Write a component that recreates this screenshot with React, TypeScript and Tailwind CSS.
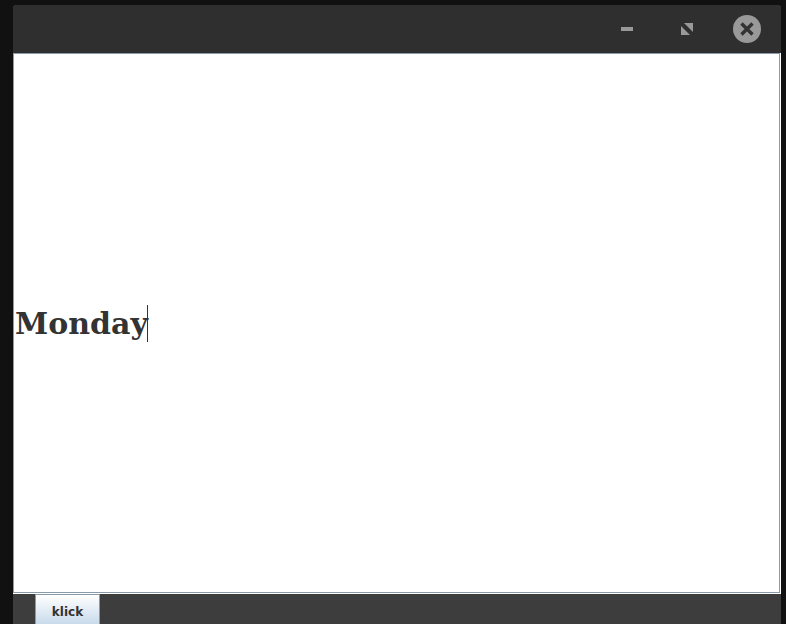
export default function App() {
  return (
    <div className="h-[624px] w-[786px] overflow-hidden bg-[#111111] pt-[5px] pl-[13px] pr-[5px]">
      <div className="flex h-full flex-col overflow-hidden rounded-t-[3px] bg-[#3d3d3d]">
        {/* title bar */}
        <div className="flex h-[48px] shrink-0 items-center justify-end bg-[#2f2f2f]">
          <div className="mr-[48px] h-[4px] w-[12px] bg-[#999999]" />
          <svg className="mr-[40px]" width="12" height="12" viewBox="0 0 12 12">
            <path d="M3 0H12V9Z" fill="#999999" />
            <path d="M0 3L9 12H0Z" fill="#999999" />
          </svg>
          <div className="mr-[20px] flex h-[28px] w-[28px] items-center justify-center rounded-full bg-[#999999]">
            <svg width="14" height="14" viewBox="0 0 14 14">
              <path d="M1.5 1.5L12.5 12.5M12.5 1.5L1.5 12.5" stroke="#333333" strokeWidth="3.4" />
            </svg>
          </div>
        </div>

        {/* text area, etched border */}
        <div className="h-[541px] shrink-0 border-r border-b border-white">
          <div className="flex h-full items-center border border-[#8a9aa9] bg-white pl-px">
            <div className="flex h-[37px] items-center">
              <span className="pt-[2px] font-['DejaVu_Serif',serif] text-[30px] leading-none font-bold text-[#333333]">Monday</span>
              <div className="-ml-px h-[37px] w-px bg-[#333333]" />
            </div>
          </div>
        </div>

        {/* footer */}
        <div className="flex flex-1 pl-[22px]">
          <button className="h-[40px] w-[65px] border border-[#8a9aa9] bg-gradient-to-b from-white to-[#b8cfe5] pb-[5px] font-['DejaVu_Sans',sans-serif] text-[12px] font-bold text-[#333333]">
            klick
          </button>
        </div>
      </div>
    </div>
  );
}
